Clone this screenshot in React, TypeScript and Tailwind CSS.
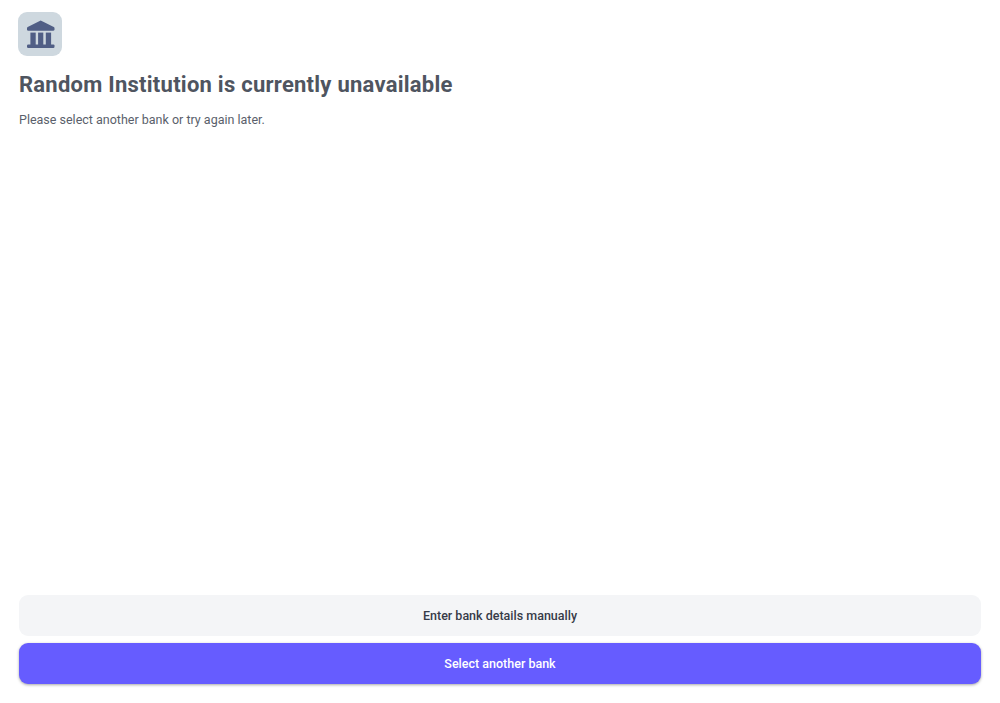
import React from "react";

function BankIcon() {
  return (
    <svg viewBox="0 0 28 28" className="ml-[1px] h-[28px] w-[28px]" fill="#505e85">
      <path d="M13.7 0.6 L26.8 7 Q27.5 7.4 27.5 8.1 V9.2 Q27.5 10.8 26 10.8 H1.4 Q0 10.8 0 9.2 V8.1 Q0 7.4 0.7 7 Z" />
      <rect x="3.4" y="12.6" width="5.3" height="13" />
      <rect x="11.1" y="12.6" width="5.2" height="13" />
      <rect x="18.8" y="12.6" width="5.3" height="13" />
      <rect x="0" y="24.4" width="27.5" height="3.6" rx="1.2" />
    </svg>
  );
}

export default function App() {
  return (
    <main className="flex h-[703px] w-full flex-col bg-white px-[19px] pt-[12.4px] pb-[19px] font-['Roboto',sans-serif] text-[#4f5560]">
      <div className="-ml-px flex h-[44px] w-[44.4px] items-center justify-center rounded-[9px] bg-[#ced8df]">
        <BankIcon />
      </div>
      <h1 className="mt-[13.6px] text-[22px] leading-[30px] font-bold tracking-[0.25px]">
        Random Institution is currently unavailable
      </h1>
      <p className="mt-[11px] text-[12.5px] leading-[18px] text-[#5a5f6b]">Please select another bank or try again later.</p>
      <div className="mt-auto flex flex-col gap-[6.6px]">
        <button className="h-[41px] rounded-[9px] bg-[#f4f5f7] pt-[2px] text-[12.5px] font-medium text-[#373b48]">
          Enter bank details manually
        </button>
        <button className="h-[41.4px] rounded-[9px] bg-[#665cff] pt-[2px] text-[12.5px] font-medium text-white shadow-[0_1px_3px_rgba(0,0,0,0.35)]">
          Select another bank
        </button>
      </div>
    </main>
  );
}
